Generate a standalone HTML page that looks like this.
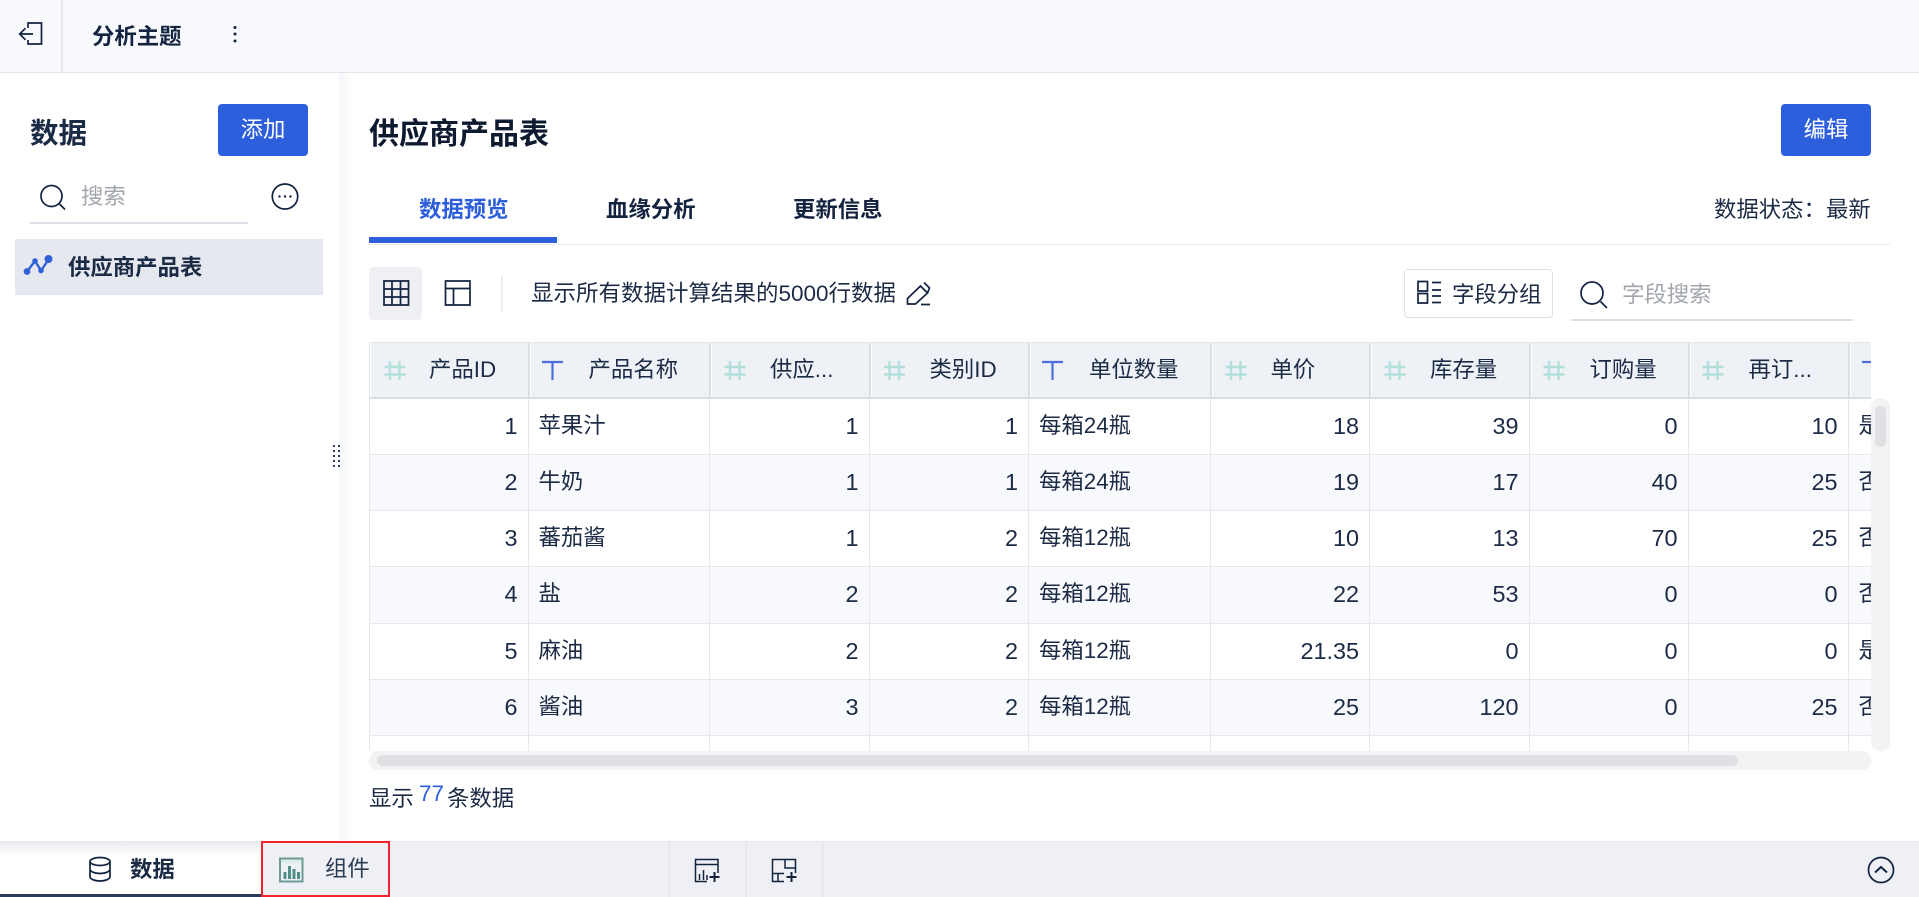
<!DOCTYPE html>
<html lang="zh"><head><meta charset="utf-8"><title>分析主题</title>
<style>
*{box-sizing:border-box}
html,body{margin:0;padding:0;width:1919px;height:897px;overflow:hidden;background:#fff}
body{position:relative;font-family:"Liberation Sans","Noto Sans CJK SC",sans-serif;font-size:22.4px;color:#1c2b45}
.a{position:absolute;white-space:nowrap;line-height:30px}
.b{font-weight:700}
.btn{position:absolute;background:#2d5fdd;color:#fff;border-radius:4px;text-align:center;line-height:52px;height:52px;width:90px}
#tw{position:absolute;left:369px;top:342px;width:1502px;height:409px;overflow:hidden}
.r{position:absolute;left:0;width:1700px;height:57px;display:flex;background:#fff;border-top:1.5px solid #e6e8ee}
.r.o{background:#f7f9fc}
.r div{height:100%;border-right:1.5px solid #e6e8ee;line-height:53px;padding:0 10px 0 10px;flex:none;white-space:nowrap;overflow:hidden}
.r div.n{text-align:right;font-size:23.4px;line-height:54px}
.r div:first-child{border-left:1.5px solid #e6e8ee}
.h{position:absolute;left:0;top:0;width:1700px;height:56px;background:#eef1f6;display:flex;border:1px solid #e4e6ec;border-bottom:none}
.h div{height:100%;border-right:2px solid #dadde5;border-left:1px solid #fff;line-height:54px;padding-left:58px;flex:none;white-space:nowrap;overflow:hidden}
.w1{width:159.5px}.w2{width:181.5px}.w3{width:159.5px}.w4{width:159.5px}.w5{width:181.5px}.w6{width:159.5px}.w7{width:159.5px}.w8{width:159px}.w9{width:160px}.w10{width:200px}
</style></head><body>
<!-- top bar -->
<div class="a" style="left:0;top:0;width:1919px;height:73px;background:#f8f9fc;border-bottom:1.5px solid #e5e7ee"></div>
<div class="a" style="left:61px;top:0;width:1.5px;height:72px;background:#e8e9f0"></div>
<div class="a b" style="left:92px;top:22px;font-size:22.4px;color:#14233f">分析主题</div>
<!-- left panel -->
<div class="a" style="left:339px;top:73px;width:14px;height:768px;background:linear-gradient(90deg,#f5f6f9,#fff)"></div>
<div class="a b" style="left:30px;top:114px;font-size:28.5px;line-height:40px;color:#1c2b45">数据</div>
<div class="btn" style="left:218px;top:104px">添加</div>
<div class="a" style="left:81px;top:182px;color:#a2a6ad">搜索</div>
<div class="a" style="left:30px;top:222px;width:218px;height:2px;background:#dddfe6"></div>
<div class="a" style="left:15px;top:239px;width:308px;height:56px;background:#e6e8f0"></div>
<div class="a b" style="left:68px;top:253px">供应商产品表</div>
<!-- right header -->
<div class="a b" style="left:369px;top:115px;font-size:30px;line-height:40px;color:#0e1a30">供应商产品表</div>
<div class="btn" style="left:1781px;top:104px">编辑</div>
<div class="a b" style="left:419px;top:195px;color:#2d5fdd">数据预览</div>
<div class="a b" style="left:606px;top:195px;color:#14233f">血缘分析</div>
<div class="a b" style="left:793px;top:195px;color:#14233f">更新信息</div>
<div class="a" style="left:1714px;top:195px">数据状态：最新</div>
<div class="a" style="left:369px;top:243.5px;width:1521px;height:1.5px;background:#e8eaf0"></div>
<div class="a" style="left:369px;top:237px;width:188px;height:6px;background:#2d5fdd"></div>
<!-- toolbar -->
<div class="a" style="left:369px;top:267px;width:53px;height:53px;background:#eef0f4;border-radius:4px"></div>
<div class="a" style="left:501px;top:275px;width:1.5px;height:37px;background:#eceef2"></div>
<div class="a" style="left:531px;top:279px;font-size:22.5px">显示所有数据计算结果的5000行数据</div>
<div class="a" style="left:1404px;top:269px;width:149px;height:49px;border:1px solid #dfe1e8;border-radius:4px;background:#fff"></div>
<div class="a" style="left:1452px;top:279.500px">字段分组</div>
<div class="a" style="left:1622px;top:280px;color:#a2a6ad">字段搜索</div>
<div class="a" style="left:1571px;top:319px;width:282px;height:2px;background:#dddfe6"></div>
<!-- table -->
<div id="tw">
<div class="h"><div class="w1">产品ID</div><div class="w2">产品名称</div><div class="w3">供应...</div><div class="w4">类别ID</div><div class="w5">单位数量</div><div class="w6">单价</div><div class="w7">库存量</div><div class="w8">订购量</div><div class="w9">再订...</div><div class="w10"></div></div>
<div class="r" style="top:54.500px;border-top:2px solid #d9dce4"><div class="w1 n">1</div><div class="w2">苹果汁</div><div class="w3 n">1</div><div class="w4 n">1</div><div class="w5">每箱24瓶</div><div class="w6 n">18</div><div class="w7 n">39</div><div class="w8 n">0</div><div class="w9 n">10</div><div class="w10">是</div></div>
<div class="r o" style="top:112px"><div class="w1 n">2</div><div class="w2">牛奶</div><div class="w3 n">1</div><div class="w4 n">1</div><div class="w5">每箱24瓶</div><div class="w6 n">19</div><div class="w7 n">17</div><div class="w8 n">40</div><div class="w9 n">25</div><div class="w10">否</div></div>
<div class="r" style="top:168px"><div class="w1 n">3</div><div class="w2">蕃茄酱</div><div class="w3 n">1</div><div class="w4 n">2</div><div class="w5">每箱12瓶</div><div class="w6 n">10</div><div class="w7 n">13</div><div class="w8 n">70</div><div class="w9 n">25</div><div class="w10">否</div></div>
<div class="r o" style="top:224px"><div class="w1 n">4</div><div class="w2">盐</div><div class="w3 n">2</div><div class="w4 n">2</div><div class="w5">每箱12瓶</div><div class="w6 n">22</div><div class="w7 n">53</div><div class="w8 n">0</div><div class="w9 n">0</div><div class="w10">否</div></div>
<div class="r" style="top:281px"><div class="w1 n">5</div><div class="w2">麻油</div><div class="w3 n">2</div><div class="w4 n">2</div><div class="w5">每箱12瓶</div><div class="w6 n">21.35</div><div class="w7 n">0</div><div class="w8 n">0</div><div class="w9 n">0</div><div class="w10">是</div></div>
<div class="r o" style="top:337px"><div class="w1 n">6</div><div class="w2">酱油</div><div class="w3 n">3</div><div class="w4 n">2</div><div class="w5">每箱12瓶</div><div class="w6 n">25</div><div class="w7 n">120</div><div class="w8 n">0</div><div class="w9 n">25</div><div class="w10">否</div></div>
<div class="r" style="top:393px"><div class="w1 n">7</div><div class="w2">海鲜粉</div><div class="w3 n">3</div><div class="w4 n">7</div><div class="w5">每箱30盒</div><div class="w6 n">30</div><div class="w7 n">15</div><div class="w8 n">0</div><div class="w9 n">10</div><div class="w10">否</div></div>
</div>
<!-- scrollbars -->
<div class="a" style="left:369px;top:751px;width:1502px;height:19px;background:#f3f3f3;border-radius:9px"></div>
<div class="a" style="left:377px;top:755px;width:1361px;height:11px;background:#dfe0e3;border-radius:6px"></div>
<div class="a" style="left:1871px;top:398px;width:19px;height:353px;background:#f3f3f3;border-radius:9px"></div>
<div class="a" style="left:1875px;top:406px;width:11px;height:41px;background:#dfe0e3;border-radius:6px"></div>
<!-- footer -->
<div class="a" style="left:369px;top:784px">显示</div>
<div class="a" style="left:419px;top:779px;color:#2d5fdd">77</div>
<div class="a" style="left:447px;top:784px">条数据</div>
<!-- bottom bar -->
<div class="a" style="left:0;top:841px;width:1919px;height:56px;background:#eef0f5;border-top:1px solid #e4e6ec"></div>
<div class="a" style="left:0;top:841px;width:262px;height:56px;background:linear-gradient(180deg,#e9ebf0 0,#fff 16px);border-bottom:3px solid #2a3a5c"></div>
<div class="a" style="left:261px;top:841px;width:129px;height:56px;border:2px solid #f5222d"></div>
<div class="a" style="left:668px;top:842px;width:1.5px;height:55px;background:#e6e8ee"></div>
<div class="a" style="left:745px;top:842px;width:1.5px;height:55px;background:#e6e8ee"></div>
<div class="a" style="left:822px;top:842px;width:1.5px;height:55px;background:#e6e8ee"></div>
<div class="a b" style="left:130px;top:855px">数据</div>
<div class="a" style="left:325px;top:854px;color:#2c3c55">组件</div>
<!-- icons -->
<svg class="a" style="left:0;top:0;line-height:0" width="1919" height="897" viewBox="0 0 1919 897" fill="none" stroke="#12233f" stroke-width="1.7">
<path d="M28 28v-5h13.500v21H28v-4M33 34H20M25.500 28.200 19.700 34l5.800 5.800"/>
<g fill="#12233f" stroke="none"><circle cx="235" cy="27.500" r="1.500"/><circle cx="235" cy="34" r="1.500"/><circle cx="235" cy="41" r="1.500"/></g>
<circle cx="51.500" cy="196" r="10.500"/><path d="M59 203.500l6 6"/>
<ellipse cx="285" cy="196.500" rx="12.700" ry="12.500"/><g fill="#12233f" stroke="none"><circle cx="279.500" cy="196.500" r="1.200"/><circle cx="285" cy="196.500" r="1.200"/><circle cx="290.500" cy="196.500" r="1.200"/></g>
<g stroke="#3160d8" stroke-width="2.400" fill="#3160d8"><path fill="none" d="M27 271.500 35 261 41 270.500 49 259"/><circle cx="27" cy="271.500" r="2.200"/><circle cx="35" cy="261" r="1.600"/><circle cx="41" cy="270.500" r="1.600"/><circle cx="48.500" cy="259" r="2.800"/></g>
<path d="M384 281h24.500v24H384zM392 281v24M400.500 281v24M384 289h24.500M384 297h24.500"/>
<path d="M445.500 281h24.500v24h-24.500zM445.500 288.500h24.500M453.500 288.500V305"/>
<path d="M920.500 286 927.500 293 915.500 304H907.500V298.500ZM924 282.500l5.500 5.500-2 5M921 304.500H930"/>
<path d="M1418 281.500h9.500v9.500h-9.500zM1418 293.500h9.500v9.500h-9.500zM1432 282.500h9M1432 290h9M1432 296h9M1432 302.500h9"/>
<circle cx="1592" cy="293" r="11"/><path d="M1600.500 301.500l6.500 6.500"/>
<g stroke="#b3e0d8" stroke-width="2.400">
<path d="M390 361v19M399.500 361v19M384.500 367h21M384.500 374.500h21"/>
<path transform="translate(340)" d="M390 361v19M399.500 361v19M384.500 367h21M384.500 374.500h21"/>
<path transform="translate(499.500)" d="M390 361v19M399.500 361v19M384.500 367h21M384.500 374.500h21"/>
<path transform="translate(841)" d="M390 361v19M399.500 361v19M384.500 367h21M384.500 374.500h21"/>
<path transform="translate(1000)" d="M390 361v19M399.500 361v19M384.500 367h21M384.500 374.500h21"/>
<path transform="translate(1159)" d="M390 361v19M399.500 361v19M384.500 367h21M384.500 374.500h21"/>
<path transform="translate(1318)" d="M390 361v19M399.500 361v19M384.500 367h21M384.500 374.500h21"/>
</g>
<g stroke="#4d6fdc" stroke-width="2.200"><path d="M542 362h21M552.500 362v18"/><path d="M1042 362h21M1052.500 362v18"/><path d="M1862 362h9"/></g>
<!-- pane handle -->
<g fill="#2a3a5c" stroke="none"><rect x="333" y="445" width="2" height="2"/><rect x="338" y="445" width="2" height="2"/><rect x="333" y="450" width="2" height="2"/><rect x="338" y="450" width="2" height="2"/><rect x="333" y="455" width="2" height="2"/><rect x="338" y="455" width="2" height="2"/><rect x="333" y="460" width="2" height="2"/><rect x="338" y="460" width="2" height="2"/><rect x="333" y="465" width="2" height="2"/><rect x="338" y="465" width="2" height="2"/></g>
<!-- bottom icons -->
<ellipse cx="100" cy="861.500" rx="10" ry="4"/><path d="M90 861.500v15c0 2.500 4.500 4.500 10 4.500s10-2 10-4.500v-15M90 869c0 2.500 4.500 4.500 10 4.500s10-2 10-4.500"/>
<rect x="280" y="858.500" width="22.500" height="23" fill="#dbeeea" stroke="#6f9a95" stroke-width="2"/>
<rect x="281" y="863" width="20.500" height="17.500" fill="#eef2f4" stroke="none"/>
<g fill="#4f8f88" stroke="none"><rect x="283.500" y="872" width="3" height="7"/><rect x="288" y="866" width="3" height="13"/><rect x="292.500" y="869" width="3" height="10"/><rect x="297" y="872" width="3" height="7"/></g>
<path stroke-width="1.500" d="M707 881.500H695.500V859.500H718V873M695.500 864.500H718"/><path stroke-width="1.500" d="M699.500 880v-6M703.500 880v-10M707 880v-5"/><path stroke-width="2" d="M709.500 877h10M714.500 872v10"/>
<path stroke-width="1.500" d="M784 881.500H772.500V859.500H795.500V873M785 859.500V868H795.500M772.500 873.500H784M778 873.500v8"/><path stroke-width="2" d="M786.500 877h10M791.500 872v10"/>
<circle cx="1881" cy="870" r="12.500"/><path stroke-width="2" d="M1875 872.500l6-5.500 6 5.500"/>
</svg>
</body></html>
